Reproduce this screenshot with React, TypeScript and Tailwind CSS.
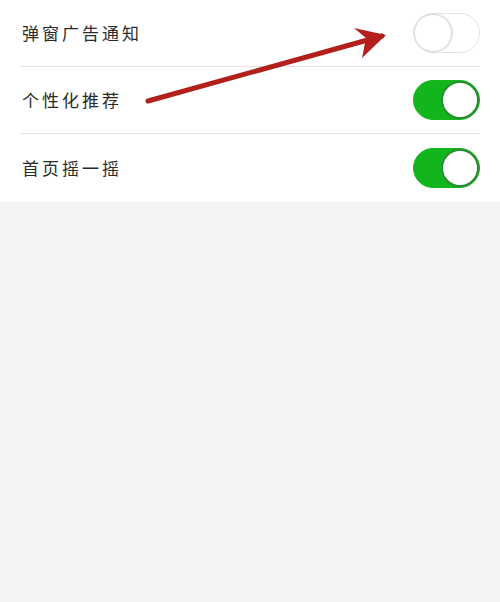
import { useState } from 'react'

interface Setting {
  id: string
  label: string
  on: boolean
}

const initial: Setting[] = [
  { id: 'popup', label: '弹窗广告通知', on: false },
  { id: 'personal', label: '个性化推荐', on: true },
  { id: 'shake', label: '首页摇一摇', on: true },
]

function Toggle({ on, onChange }: { on: boolean; onChange: () => void }) {
  return (
    <button
      type="button"
      role="switch"
      aria-checked={on}
      onClick={onChange}
      className={`relative h-[40px] w-[67px] rounded-full border transition-colors ${
        on ? 'border-[#12b51c] bg-[#12b51c]' : 'border-[#e3e3e3] bg-white'
      }`}
    >
      <span
        className={`absolute top-[0px] h-[38px] w-[38px] rounded-full bg-white transition-all ${
          on
            ? 'left-[27px] border-2 border-[#2f8a35]'
            : 'left-[0px] border border-[#dadada] shadow-[1px_0_2px_rgba(0,0,0,0.12)]'
        }`}
      />
    </button>
  )
}

export default function App() {
  const [settings, setSettings] = useState(initial)

  function toggle(id: string) {
    setSettings((s) => s.map((x) => (x.id === id ? { ...x, on: !x.on } : x)))
  }

  return (
    <div className="relative min-h-[602px] w-[500px] bg-[#f4f4f4]" style={{ fontFamily: '"Noto Sans CJK SC", sans-serif' }}>
      <div className="bg-white px-5">
        {settings.map((s, i) => (
          <div
            key={s.id}
            className={`flex h-[67px] items-center justify-between ${
              i < settings.length - 1 ? 'border-b border-[#e2e2e2]' : 'h-[68px]'
            }`}
          >
            <span className="pl-[2px] text-[17px] tracking-[3px] text-[#2a2a2a]">{s.label}</span>
            <Toggle on={s.on} onChange={() => toggle(s.id)} />
          </div>
        ))}
      </div>

      {/* annotation arrow pointing at the first switch */}
      <svg className="pointer-events-none absolute left-0 top-0" width="500" height="210" viewBox="0 0 500 210">
        <g stroke="#b3201c" strokeWidth="5" strokeLinecap="round" fill="none">
          <line x1="148" y1="101" x2="382" y2="36" />
        </g>
        <path d="M386 35 L354 28 L366 38 L362 58 Z" fill="#b3201c" />
      </svg>
    </div>
  )
}
